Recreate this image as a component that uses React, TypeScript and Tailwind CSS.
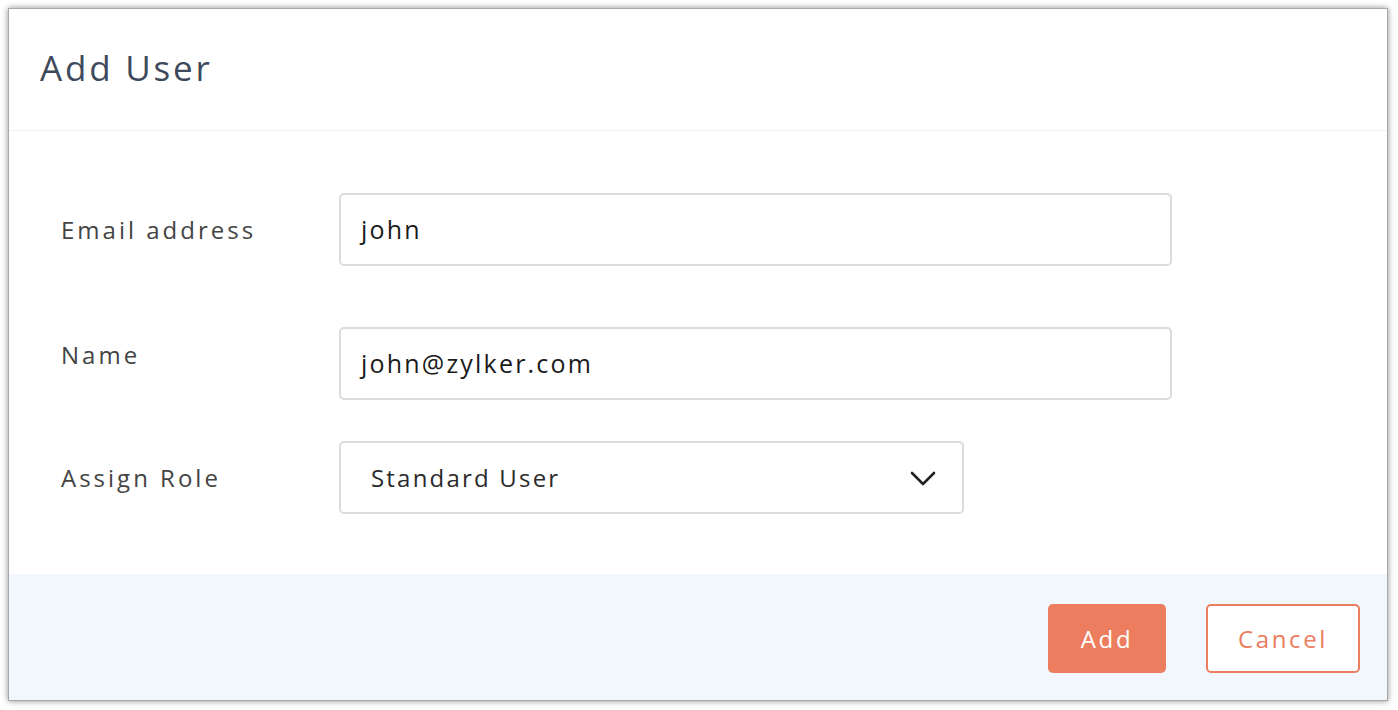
import React from 'react';

function Chevron() {
  return (
    <svg width="26" height="16" viewBox="0 0 26 16" fill="none">
      <path d="M2 3l11 11L24 3" stroke="#222" strokeWidth="2.6" strokeLinecap="round" strokeLinejoin="round" />
    </svg>
  );
}

export default function App() {
  return (
    <div className="w-[1398px] h-[710px] bg-white pt-[8px] pl-[8px] font-['Open_Sans','Liberation_Sans',sans-serif]">
      <div className="w-[1380px] h-[693px] flex flex-col bg-white border border-[#a8a8a8] shadow-[0_0_6px_rgba(0,0,0,0.45)]">
        {/* Header */}
        <div className="h-[122px] flex items-center pl-[31px] pb-[2px] border-b border-[#eef2f6]">
          <h1 className="text-[35px] text-[#3e4a5c] tracking-[2.8px]">Add User</h1>
        </div>

        {/* Form */}
        <div className="flex-1 flex flex-col pt-[62px] pl-[52px]">
          <div className="flex items-center">
            <label className="w-[278px] text-[24px] text-[#444] tracking-[3px]">Email address</label>
            <div className="w-[833px] h-[73px] flex items-center px-[20px] border-2 border-[#dcdcdc] rounded-[5px]">
              <span className="text-[25px] text-[#1a1a1a] tracking-[2.2px]">john</span>
            </div>
          </div>

          <div className="flex items-center mt-[61px]">
            <label className="w-[278px] text-[24px] text-[#444] tracking-[3px] pb-[18px]">Name</label>
            <div className="w-[833px] h-[73px] flex items-center px-[20px] border-2 border-[#dcdcdc] rounded-[5px]">
              <span className="text-[25px] text-[#1a1a1a] tracking-[2.2px]">john@zylker.com</span>
            </div>
          </div>

          <div className="flex items-center mt-[41px]">
            <label className="w-[278px] text-[24px] text-[#444] tracking-[3px]">Assign Role</label>
            <div className="w-[625px] h-[73px] flex items-center justify-between pl-[30px] pr-[26px] border-2 border-[#dcdcdc] rounded-[5px]">
              <span className="text-[24px] text-[#2a2a2a] tracking-[2.2px]">Standard User</span>
              <Chevron />
            </div>
          </div>
        </div>

        {/* Footer */}
        <div className="h-[126px] bg-[#f1f7fd] flex items-center justify-end gap-[40px] pr-[27px] pt-[3px]">
          <button className="w-[118px] h-[69px] rounded-[5px] bg-[#ec7d5e] text-white text-[24px] tracking-[2.6px]">Add</button>
          <button className="w-[154px] h-[69px] rounded-[5px] bg-white border-2 border-[#ec7d5e] text-[#ec7d5e] text-[24px] tracking-[2.6px]">Cancel</button>
        </div>
      </div>
    </div>
  );
}
